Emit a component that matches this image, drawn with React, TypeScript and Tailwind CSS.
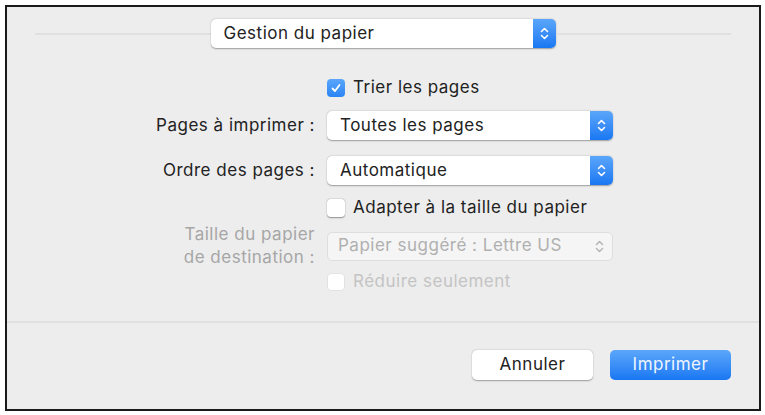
import React from "react";

function Stepper({ blue = true }: { blue?: boolean }) {
  return (
    <svg width="9" height="15" viewBox="0 0 9 15" fill="none">
      <path
        d="M1.5 5.5 L4.5 2.5 L7.5 5.5 M1.5 9.5 L4.5 12.5 L7.5 9.5"
        stroke={blue ? "#ffffff" : "#b8b8b8"}
        strokeWidth="1.6"
        strokeLinecap="round"
        strokeLinejoin="round"
      />
    </svg>
  );
}

type PopupProps = {
  value: string;
  width: string;
  disabled?: boolean;
};

function Popup({ value, width, disabled }: PopupProps) {
  if (disabled) {
    return (
      <div
        className={`${width} flex h-[29px] items-center justify-between rounded-[5px] border border-[#dedede] bg-[#f5f5f5] pl-[10px] pr-[8px]`}
      >
        <span className="text-[#b0b0b0]">{value}</span>
        <Stepper blue={false} />
      </div>
    );
  }
  return (
    <div
      className={`${width} flex h-[29px] overflow-hidden rounded-[5px] bg-white shadow-[0_0.5px_1.5px_rgba(0,0,0,0.35)]`}
    >
      <div className="flex flex-1 items-center pl-[13px] text-[#222]">
        {value}
      </div>
      <div className="flex w-[23px] items-center justify-center bg-gradient-to-b from-[#5aa6fa] to-[#1877f2]">
        <Stepper />
      </div>
    </div>
  );
}

function Checkbox({
  checked,
  disabled,
  label,
}: {
  checked?: boolean;
  disabled?: boolean;
  label: string;
}) {
  return (
    <div className="flex h-[20px] items-center">
      {checked ? (
        <div className="flex h-[18px] w-[18px] items-center justify-center rounded-[4px] bg-gradient-to-b from-[#5aa6fa] to-[#2a84f4]">
          <svg width="12" height="12" viewBox="0 0 12 12" fill="none">
            <path
              d="M2.5 6.5 L5 9 L9.5 3"
              stroke="white"
              strokeWidth="1.8"
              strokeLinecap="round"
              strokeLinejoin="round"
            />
          </svg>
        </div>
      ) : (
        <div
          className={`h-[18px] w-[18px] rounded-[4px] bg-white ${
            disabled
              ? "border border-[#e2e2e2] bg-[#f5f5f5]"
              : "shadow-[0_0.5px_1.5px_rgba(0,0,0,0.4)]"
          }`}
        />
      )}
      <span
        className={`ml-[8px] ${disabled ? "text-[#c4c4c4]" : "text-[#222]"}`}
      >
        {label}
      </span>
    </div>
  );
}

function Row({
  label,
  children,
  className = "",
  muted,
}: {
  label?: React.ReactNode;
  children: React.ReactNode;
  className?: string;
  muted?: boolean;
}) {
  return (
    <div className={`flex items-center ${className}`}>
      <div
        className={`w-[320px] pr-[12px] text-right ${muted ? "text-[#a6a6a6]" : "text-[#222]"}`}
      >
        {label}
      </div>
      {children}
    </div>
  );
}

export default function App() {
  return (
    <div className="h-[415px] w-[765px] bg-white p-[5px] font-['Inter',sans-serif] text-[17px] tracking-[0.5px]">
      <div className="flex h-[406px] w-[756px] flex-col border-2 border-[#1a1a1a] bg-[#ededed]">
        <div className="mt-[12px] flex items-center px-[28px]">
          <div className="h-[2px] flex-1 bg-[#e0e0e0]" />
          <Popup value="Gestion du papier" width="w-[345px]" />
          <div className="h-[2px] flex-1 bg-[#e0e0e0]" />
        </div>

        <Row className="mt-[30px]">
          <Checkbox checked label="Trier les pages" />
        </Row>
        <Row label="Pages à imprimer :" className="mt-[13px]">
          <Popup value="Toutes les pages" width="w-[286px]" />
        </Row>
        <Row label="Ordre des pages :" className="mt-[16px]">
          <Popup value="Automatique" width="w-[286px]" />
        </Row>
        <Row className="mt-[13px]">
          <Checkbox label="Adapter à la taille du papier" />
        </Row>
        <Row
          muted
          className="mt-[5px] h-[46px]"
          label={
            <div className="leading-[23px]">
              Taille du papier
              <br />
              de destination :
            </div>
          }
        >
          <Popup
            disabled
            value="Papier suggéré : Lettre US"
            width="w-[286px]"
          />
        </Row>
        <Row className="mt-[3px]">
          <Checkbox disabled label="Réduire seulement" />
        </Row>

        <div className="mt-[29px] h-[2px] bg-[#e0e0e0]" />

        <div className="mt-[27px] flex justify-end gap-[17px] pr-[28px]">
          <button className="h-[30px] w-[121px] rounded-[5px] bg-white text-[#222] shadow-[0_0.5px_1.5px_rgba(0,0,0,0.35)]">
            Annuler
          </button>
          <button className="h-[30px] w-[121px] rounded-[5px] bg-gradient-to-b from-[#5aa6fa] to-[#1877f2] text-[#eef5ff]">
            Imprimer
          </button>
        </div>
      </div>
    </div>
  );
}
